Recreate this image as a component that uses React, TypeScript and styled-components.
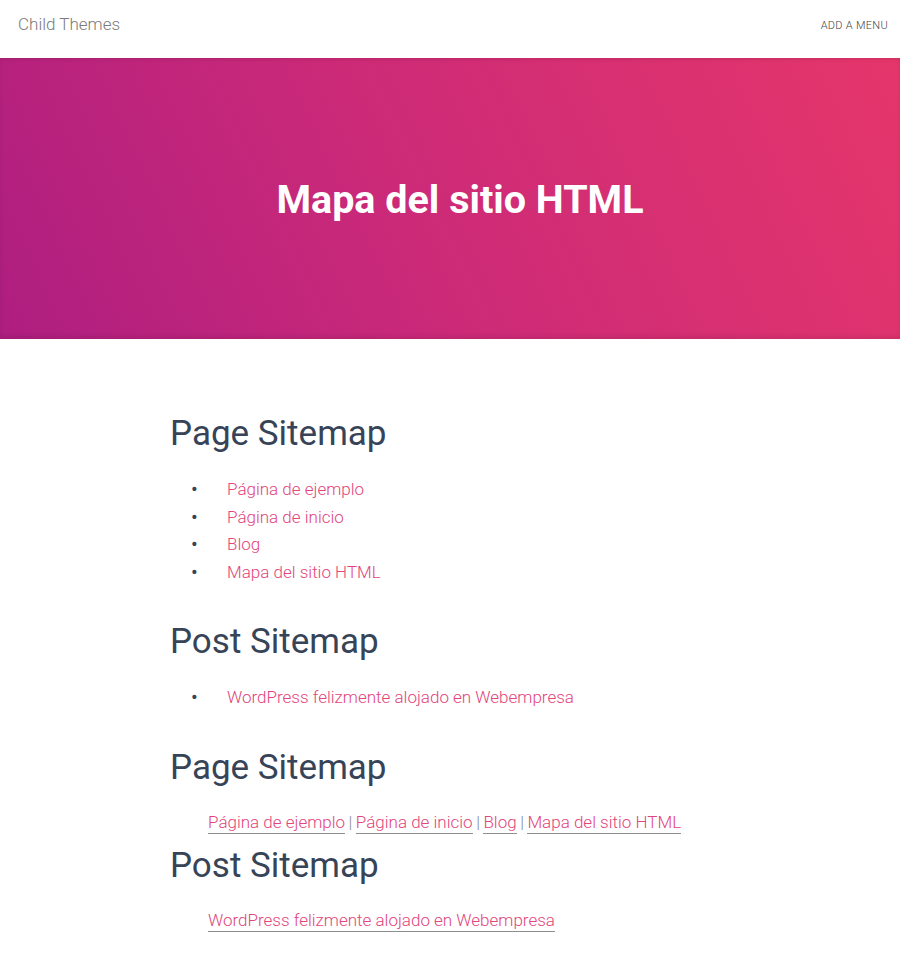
import React from "react";
import styled, { createGlobalStyle } from "styled-components";

const Global = createGlobalStyle`
  html, body { margin: 0; padding: 0; background: #fff; }
  body { font-family: Roboto, "Liberation Sans", sans-serif; -webkit-font-smoothing: antialiased; }
  * { box-sizing: border-box; }
`;

const Header = styled.header`
  height: 58px;
  display: flex;
  align-items: center;
  justify-content: space-between;
  padding: 0 12px 0 18px;
  background: #fff;
  position: relative;
  z-index: 2;
  box-shadow: 0 1px 4px rgba(0, 0, 0, 0.12);
`;

const Brand = styled.a`
  font-size: 17px;
  font-weight: 300;
  color: #7a7a7a;
  text-decoration: none;
  margin-top: -10px;
`;

const MenuLink = styled.a`
  font-size: 11px;
  font-weight: 300;
  letter-spacing: 0.3px;
  color: #444;
  text-transform: uppercase;
  text-decoration: none;
  margin-top: -8px;
`;

const Hero = styled.section`
  height: 281px;
  display: flex;
  align-items: center;
  justify-content: center;
  padding-left: 20px;
  background: linear-gradient(65deg, #ae1e80 0%, #cc2a78 45%, #e5366b 100%);
  box-shadow: inset 0 -3px 4px rgba(0, 0, 0, 0.08);
`;

const HeroTitle = styled.h1`
  margin: 2px 0 0 0;
  font-size: 39.5px;
  font-weight: 700;
  color: #fff;
  line-height: 1.2;
`;

const Content = styled.main`
  max-width: 560px;
  margin: 0 auto;
  padding: 73px 0 20px;
`;

const Heading = styled.h2`
  margin: 0 0 21px;
  font-size: 35px;
  font-weight: 400;
  line-height: 43px;
  color: #374458;
`;

const List = styled.ul`
  margin: 0 0 34px;
  padding: 0 0 0 21px;
  list-style: none;
`;

const Item = styled.li`
  display: flex;
  font-size: 17px;
  font-weight: 300;
  line-height: 27.5px;
  &::before {
    content: "•";
    width: 36px;
    flex: none;
    color: #374458;
    font-weight: 400;
    font-size: 20px;
  }
`;

const PinkLink = styled.a`
  color: #e2457b;
  text-decoration: none;
`;

const Inline = styled.div<{ $gap: number }>`
  margin: -1px 0 ${(p) => p.$gap}px;
  padding-left: 38px;
  font-size: 17px;
  font-weight: 300;
  line-height: 27.5px;
  color: #777;
`;

const UnderLink = styled.a`
  color: #e2457b;
  text-decoration: none;
  border-bottom: 1px solid #8e8e8e;
  padding-bottom: 1px;
`;

const Sep = styled.span`
  color: #888;
  margin: 0 3.5px;
`;

const pages = ["Página de ejemplo", "Página de inicio", "Blog", "Mapa del sitio HTML"];
const posts = ["WordPress felizmente alojado en Webempresa"];

export default function App() {
  return (
    <>
      <Global />
      <Header>
        <Brand href="#">Child Themes</Brand>
        <MenuLink href="#">Add a menu</MenuLink>
      </Header>
      <Hero>
        <HeroTitle>Mapa del sitio HTML</HeroTitle>
      </Hero>
      <Content>
        <Heading>Page Sitemap</Heading>
        <List>
          {pages.map((p) => (
            <Item key={p}>
              <PinkLink href="#">{p}</PinkLink>
            </Item>
          ))}
        </List>
        <Heading>Post Sitemap</Heading>
        <List>
          {posts.map((p) => (
            <Item key={p}>
              <PinkLink href="#">{p}</PinkLink>
            </Item>
          ))}
        </List>
        <Heading>Page Sitemap</Heading>
        <Inline $gap={8}>
          {pages.map((p, i) => (
            <React.Fragment key={p}>
              {i > 0 && <Sep>|</Sep>}
              <UnderLink href="#">{p}</UnderLink>
            </React.Fragment>
          ))}
        </Inline>
        <Heading>Post Sitemap</Heading>
        <Inline $gap={20}>
          {posts.map((p) => (
            <UnderLink key={p} href="#">{p}</UnderLink>
          ))}
        </Inline>
      </Content>
    </>
  );
}
